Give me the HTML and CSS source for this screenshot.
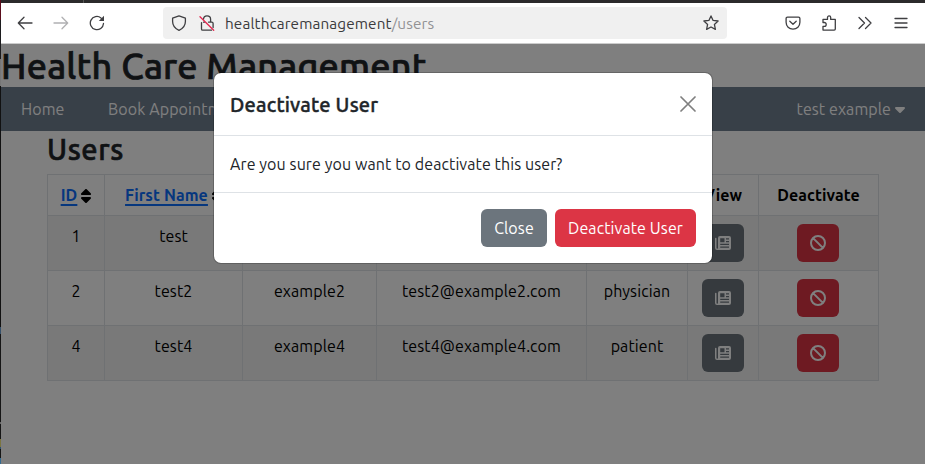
FILE: index.html
```html
<!DOCTYPE html>
<html lang="en">
<head>
<meta charset="utf-8">
<title>Health Care Management</title>
<link rel="stylesheet" href="styles.css">
</head>
<body>
<svg width="0" height="0" class="defs">
  <symbol id="sort" viewBox="0 0 320 512"><path fill="currentColor" d="M137.4 41.4c12.5-12.5 32.8-12.5 45.3 0l128 128c9.2 9.2 11.9 22.9 6.9 34.9s-16.6 19.8-29.6 19.8H32c-12.9 0-24.6-7.8-29.6-19.8s-2.2-25.7 6.9-34.9l128-128zm0 429.3l-128-128c-9.2-9.2-11.9-22.9-6.9-34.9s16.6-19.8 29.6-19.8H288c12.9 0 24.6 7.8 29.6 19.8s2.2 25.7-6.9 34.9l-128 128c-12.5 12.5-32.8 12.5-45.3 0z"/></symbol>
  <symbol id="caret" viewBox="0 0 320 512"><path fill="currentColor" d="M137.4 374.6c12.5 12.5 32.8 12.5 45.3 0l128-128c9.2-9.2 11.9-22.9 6.9-34.9s-16.6-19.8-29.6-19.8L32 192c-12.9 0-24.6 7.8-29.6 19.8s-2.2 25.7 6.9 34.9l128 128z"/></symbol>
  <symbol id="news" viewBox="0 0 16 16"><path fill="currentColor" fill-rule="evenodd" d="M5 1h9a2 2 0 0 1 2 2v10a2 2 0 0 1-2 2H2a2 2 0 0 1-2-2V3.500a.75.75 0 0 1 1.500 0V13a.75.75 0 0 0 1.500 0V3a2 2 0 0 1 2-2zM5.200 3.200v4h4.300v-4zM11 3.200v1.300h3V3.200zM11 6v1.300h3V6zM5.200 8.700V10H14V8.700zM5.200 11.500v1.300H14v-1.300z"/></symbol>
  <symbol id="ban" viewBox="0 0 16 16"><path fill="none" stroke="currentColor" stroke-width="2" d="M8 1a7 7 0 1 0 0 14A7 7 0 0 0 8 1ZM3.1 3.1l9.8 9.8"/></symbol>
</svg>
<div class="window">
  <div class="edge"></div>
  <div class="main">
    <div class="tabs"></div>
    <div class="toolbar">
      <svg class="tool back" viewBox="0 0 16 16"><path d="M15 8H1.5M7 2.3L1.3 8 7 13.700"/></svg>
      <svg class="tool forward" viewBox="0 0 16 16"><path d="M1 8h13.500M9 2.300L14.700 8 9 13.700"/></svg>
      <svg class="tool reload" viewBox="0 0 16 16"><path d="M14.500 8.500A6.600 6.600 0 1 1 12 2.900l2 1.500"/><path class="solid" d="M15 .8v5.200H9.800z"/></svg>
      <div class="url">
        <svg class="tool" viewBox="0 0 16 16"><path d="M8 .9l6.400 2.300v3.300c0 3.600-2.300 7-6.400 8.800-4.100-1.800-6.400-5.200-6.400-8.800V3.200z"/></svg>
        <svg class="tool lock" viewBox="0 0 16 16"><path d="M4.500 4.200C4.600 2.200 6 .9 8 .9s3.600 1.400 3.600 3.500V7M9.500 7.200h3.300c.8 0 1.300.5 1.300 1.300v4M2.500 7.600v6.400c0 .8.5 1.200 1.200 1.200h8.800M4.500 7.200h1"/><path class="slash" d="M1 1.800l13.700 13.500"/></svg>
        <span class="address">healthcaremanagement<span class="path">/users</span></span>
        <svg class="tool star" viewBox="0 0 16 16"><path d="M8 .9l2.100 4.500 5 .6-3.700 3.400 1 5L8 12l-4.400 2.400 1-5L.9 6l5-.6z"/></svg>
      </div>
      <svg class="tool pocket" viewBox="0 0 16 16"><path d="M2.500 2.100h11c.9 0 1.400.5 1.400 1.400v3.800c0 3.900-3 6.800-6.900 6.800S1.100 11.200 1.100 7.300V3.500c0-.9.500-1.400 1.400-1.400zM4.800 6.300L8 9.300l3.200-3"/></svg>
      <svg class="tool puzzle" viewBox="0 0 16 16"><path d="M2 15.100v-3.800h1.300a1.900 1.900 0 0 0 0-3.800H2V4.400h4.500V2.500a1.600 1.600 0 0 1 3.200 0v1.900h4.600v9.600c0 .7-.4 1.100-1.100 1.100z"/></svg>
      <svg class="tool more" viewBox="0 0 16 16"><path d="M2 2.500L7.500 8 2 13.500M8.500 2.500L14 8l-5.500 5.500"/></svg>
      <svg class="tool menu" viewBox="0 0 16 16"><path d="M2 3.500h12M2 8h12M2 12.500h12"/></svg>
    </div>
    <div class="page">
      <h1>Health Care Management</h1>
      <nav>
        <span class="home">Home</span>
        <span class="book">Book Appointment</span>
        <span class="account">test example</span>
        <svg class="caret"><use href="#caret"/></svg>
      </nav>
      <main>
        <h2>Users</h2>
        <table>
          <colgroup><col class="c1"><col class="c2"><col class="c3"><col class="c4"><col class="c5"><col class="c6"><col class="c7"></colgroup>
          <thead><tr>
            <th><a>ID</a><svg class="sort"><use href="#sort"/></svg></th>
            <th><a>First Name</a><svg class="sort"><use href="#sort"/></svg></th>
            <th>Last Name</th><th>Email</th><th>Role</th><th>View</th><th>Deactivate</th>
          </tr></thead>
          <tbody>
            <tr><td>1</td><td>test</td><td></td><td></td><td></td><td><span class="btn gray"><svg><use href="#news"/></svg></span></td><td><span class="btn red"><svg><use href="#ban"/></svg></span></td></tr>
            <tr><td>2</td><td>test2</td><td>example2</td><td>test2@example2.com</td><td>physician</td><td><span class="btn gray"><svg><use href="#news"/></svg></span></td><td><span class="btn red"><svg><use href="#ban"/></svg></span></td></tr>
            <tr><td>4</td><td>test4</td><td>example4</td><td>test4@example4.com</td><td>patient</td><td><span class="btn gray"><svg><use href="#news"/></svg></span></td><td><span class="btn red"><svg><use href="#ban"/></svg></span></td></tr>
          </tbody>
        </table>
      </main>
      <div class="backdrop">
        <div class="modal">
          <div class="modal-header"><h5>Deactivate User</h5><svg class="close" viewBox="0 0 16 16"><path d="M1 1l14 14M15 1L1 15"/></svg></div>
          <div class="modal-body"><span>Are you sure you want to deactivate this user?</span></div>
          <div class="modal-footer"><span class="btn gray label close-btn">Close</span><span class="btn red label confirm">Deactivate User</span></div>
        </div>
      </div>
    </div>
  </div>
</div>
</body>
</html>
```

FILE: styles.css
```css
* { box-sizing: border-box; }
body { margin: 0; font: 16px/24px Ubuntu, "Noto Sans", sans-serif; letter-spacing: 0.1px; color: #212529; overflow: hidden; }
.defs { display: block; position: absolute; }
.window { display: flex; width: 925px; height: 464px; }
.edge { width: 1px; background: linear-gradient(#5a0d1c 0 20px, #1c1c1e 20px 59px, #777 59px 86px, #111 86px 327px, #35506a 327px 334px, #151515 334px 422px, #666 422px 424px, #151515 424px 439px, #7b7540 439px 447px, #2b5070 447px 449px, #151515 449px 458px, #336a90 458px); }
.main { flex: 1; display: flex; flex-direction: column; min-width: 0; }
.tabs { height: 3px; background: linear-gradient(90deg, #2b2a2b 82px, #555 82px 83px, #2b2a2b 83px); }
.toolbar { height: 41px; background: #fff; border-bottom: 1px solid #ccc; display: flex; align-items: center; }
.tool { width: 16px; height: 16px; flex: none; fill: none; stroke: #3f3f42; stroke-width: 1.3; stroke-linecap: round; stroke-linejoin: round; }
.back { margin-left: 16px; }
.forward { margin-left: 20px; stroke: #b0b0b2; }
.reload { margin-left: 20px; }
.solid { fill: #3f3f42; stroke: none; }
.url { width: 564px; height: 32px; margin-left: 58px; border-radius: 4px; background: #f0f0f0; display: flex; align-items: center; padding: 0 8px; }
.lock { margin-left: 12px; }
.slash { stroke: #e22850; }
.address { margin-left: 10px; padding-top: 2px; font-size: 15.3px; letter-spacing: 0.12px; color: #3b3b3d; }
.path { color: #929294; }
.star { margin-left: auto; }
.pocket { margin-left: 58px; }
.puzzle, .more { margin-left: 20px; }
.menu { margin-left: 20px; }
.page { flex: 1; position: relative; background: #fff; }
h1, h2, h5 { margin: 0; font-weight: 500; white-space: nowrap; -webkit-text-stroke: 0.4px currentColor; }
h1 { height: 43px; font-size: 36px; line-height: 43px; letter-spacing: 0.2px; -webkit-text-stroke-width: 0.7px; }
nav { height: 44px; background: #708090; color: #fff; display: flex; align-items: center; padding: 0 20px; }
.book { margin-left: 43.5px; }
.account { margin-left: auto; }
.caret, .sort { width: 10px; height: 16px; margin-left: 4px; }
.sort { vertical-align: -3px; }
main { padding: 0 46px; }
h2 { height: 43px; font-size: 29px; line-height: 37px; letter-spacing: 0.6px; -webkit-text-stroke-width: 0.6px; }
table { width: 832px; table-layout: fixed; border-collapse: collapse; text-align: center; color: #000; }
th, td { border: 1px solid #dee2e6; padding: 8px; vertical-align: top; white-space: nowrap; }
th { height: 41px; font-weight: 700; }
td { height: 55px; }
tbody tr:nth-child(odd) { background: #f2f2f2; }
th a { color: #0d6efd; text-decoration: underline; text-decoration-thickness: 2px; text-underline-offset: 3px; }
.c1 { width: 57px; } .c2 { width: 138px; } .c3 { width: 134px; } .c4 { width: 210px; } .c5 { width: 101px; } .c6 { width: 71px; } .c7 { width: 120px; }
.btn { display: inline-flex; align-items: center; justify-content: center; width: 42px; height: 38px; border-radius: 6px; color: #fff; vertical-align: top; }
td:last-child { padding-right: 9px; }
.btn svg { width: 16px; height: 16px; }
.gray { background: #6c757d; }
.red { background: #dc3545; }
.backdrop { position: absolute; inset: 0; background: rgba(0,0,0,.5); display: flex; justify-content: center; align-items: flex-start; padding-top: 28px; }
.modal { width: 500px; height: 192px; background: #fff; background-clip: padding-box; border: 1px solid rgba(0,0,0,.2); border-radius: 8px; }
.modal-header { height: 63px; border-bottom: 1px solid #dee2e6; padding: 16px; display: flex; align-items: center; justify-content: space-between; }
h5 { font-size: 20px; letter-spacing: 0.2px; padding-top: 1px; }
.close { width: 16px; height: 16px; stroke: #7f7f7f; stroke-width: 1.7; stroke-linecap: round; }
.modal-body { height: 57px; padding: 16px; border-bottom: 1px solid #dee2e6; }
.modal-footer { display: flex; justify-content: flex-end; gap: 8px; padding: 16px; }
.close-btn { width: 66px; }
.confirm { width: 141px; }
```
